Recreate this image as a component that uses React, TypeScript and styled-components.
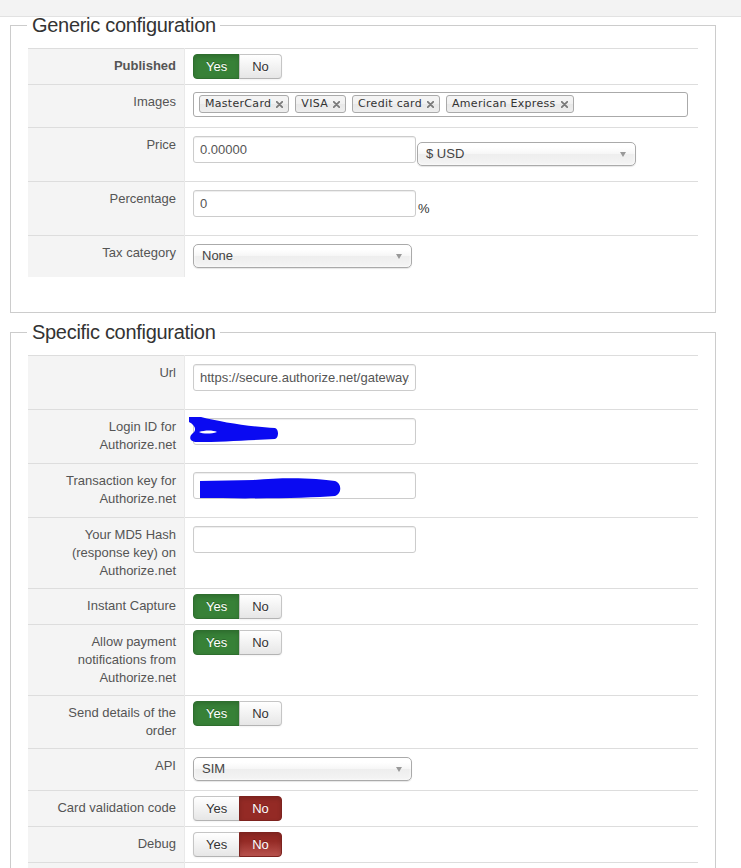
import React from 'react';
import styled, {createGlobalStyle} from 'styled-components';

const GlobalStyle = createGlobalStyle`
  body {
    margin: 0;
    background: #fff;
    font-family: "Liberation Sans", Arial, sans-serif;
    font-size: 13px;
    line-height: 18px;
    color: #333;
  }
`;

type Tone = 'off' | 'yes' | 'no';

const TopBar = styled.div`
  height: 16px;
  background: #f3f3f3;
  border-bottom: 1px solid #e2e2e2;
`;

const Page = styled.div`
  display: flex;
  flex-direction: column;
  gap: 11px;
  padding: 0 25px 0 10px;
`;

const Fieldset = styled.fieldset`
  min-width: 0;
  margin: 0;
  padding: 0 17px 35px;
  border: 1px solid #ccc;
`;

const Legend = styled.legend`
  margin: 0 0 15px -1px;
  padding: 0 4px 0 5px;
  font-size: 20px;
  letter-spacing: -0.3px;
  line-height: 16px;
  color: #333;
`;

const Table = styled.table`
  width: 100%;
  border-collapse: collapse;
  table-layout: fixed;
`;

const Key = styled.td<{ $bold?: boolean }>`
  width: 140px;
  padding: 8px;
  background: #f4f4f4;
  border-top: 1px solid #ddd;
  border-right: 1px solid #e9e9e9;
  text-align: right;
  vertical-align: top;
  color: #555;
  font-weight: ${(props) => props.$bold ? 'bold' : 'normal'};
`;

const Value = styled.td`
  padding: 5px 8px;
  border-top: 1px solid #ddd;
  vertical-align: top;
`;

const Inline = styled.div`
  display: flex;
  align-items: flex-start;
`;

const InputWrap = styled.div`
  position: relative;
  width: 223px;
`;

const Scribble = styled.svg`
  position: absolute;
  overflow: visible;
  pointer-events: none;
`;

const TextField = styled.input`
  display: block;
  box-sizing: border-box;
  width: 223px;
  height: 27px;
  margin: 3px 0 13px;
  padding: 4px 6px;
  border: 1px solid #ccc;
  border-radius: 3px;
  background: #fff;
  box-shadow: inset 0 1px 1px rgba(0, 0, 0, 0.075);
  font: 13px/18px "Liberation Sans", Arial, sans-serif;
  color: #555;
  outline: none;
`;

const Suffix = styled.span`
  margin-left: 2px;
  padding-top: 13px;
  color: #333;
`;

const SelectBox = styled.div<{ $top?: number }>`
  box-sizing: border-box;
  display: flex;
  align-items: center;
  justify-content: space-between;
  width: 219px;
  height: 24px;
  margin: ${(props) => props.$top ?? 3}px 0 4px 1px;
  padding-left: 8px;
  border: 1px solid #aaa;
  border-radius: 5px;
  background: linear-gradient(#fff 20%, #f6f6f6 50%, #eee 52%, #f4f4f4 100%);
  box-shadow: inset 0 0 3px #fff, 0 1px 1px rgba(0, 0, 0, 0.1);
  color: #444;
  line-height: 22px;

  &:first-child {
    margin-left: 0;
  }
`;

const Arrow = styled.span`
  width: 0;
  height: 0;
  margin-right: 9px;
  border-left: 3.5px solid transparent;
  border-right: 3.5px solid transparent;
  border-top: 5px solid #999;
`;

const ChipBox = styled.ul`
  box-sizing: border-box;
  display: flex;
  align-items: flex-start;
  gap: 6px;
  width: 495px;
  height: 25px;
  margin: 2px 0 5px;
  padding: 2px 5px;
  list-style: none;
  border: 1px solid #aaa;
  border-radius: 3px;
  background: #fff;
`;

const Chip = styled.li`
  box-sizing: border-box;
  display: flex;
  align-items: center;
  gap: 5px;
  height: 18px;
  padding: 0 5px;
  border: 1px solid #aaa;
  border-radius: 3px;
  background: linear-gradient(#f4f4f4 20%, #f0f0f0 50%, #e8e8e8 52%, #eee 100%);
  font: 11px/16px "DejaVu Sans", Verdana, sans-serif;
  letter-spacing: 0.3px;
  color: #333;
  white-space: nowrap;
`;

const BtnGroup = styled.div`
  display: inline-flex;
  vertical-align: top;
`;

const toneBg = (tone: Tone, hover?: boolean) => {
    if (tone === 'yes') return '#378137';
    if (tone === 'no') return hover ? 'linear-gradient(#942a25 35%, #b9534e)' : '#942a25';
    return 'linear-gradient(#fff, #e6e6e6)';
};

const Btn = styled.span<{ $tone: Tone; $hover?: boolean }>`
  box-sizing: border-box;
  height: 25px;
  padding: 0 12px;
  border: 1px solid ${(props) => props.$tone === 'yes' ? '#2e6e2e' : props.$tone === 'no' ? '#7d231f' : '#c5c5c5'};
  border-bottom-color: ${(props) => props.$tone === 'off' ? '#b3b3b3' : props.$tone === 'yes' ? '#2e6e2e' : '#7d231f'};
  background: ${(props) => toneBg(props.$tone, props.$hover)};
  color: ${(props) => props.$tone === 'off' ? '#333' : '#fff'};
  text-shadow: ${(props) => props.$tone === 'off' ? '0 1px 1px rgba(255,255,255,.75)' : '0 -1px 0 rgba(0,0,0,.25)'};
  box-shadow: ${(props) => props.$tone === 'off'
          ? 'inset 0 1px 0 rgba(255,255,255,.2), 0 1px 2px rgba(0,0,0,.05)'
          : 'inset 0 2px 4px rgba(0,0,0,.15)'};
  font-size: 13px;
  line-height: 23px;

  &:first-child {
    border-radius: 4px 0 0 4px;
  }

  &:last-child {
    margin-left: -1px;
    border-radius: 0 4px 4px 0;
  }
`;

interface ToggleProps {
    value: 'yes' | 'no';
    hover?: boolean;
}

const Toggle = ({value, hover}: ToggleProps) => (
    <BtnGroup>
        <Btn $tone={value === 'yes' ? 'yes' : 'off'}>Yes</Btn>
        <Btn $tone={value === 'no' ? 'no' : 'off'} $hover={hover}>No</Btn>
    </BtnGroup>
);

const Select = ({value, top}: { value: string; top?: number }) => (
    <SelectBox $top={top}>
        <span>{value}</span>
        <Arrow/>
    </SelectBox>
);

const CloseIcon = () => (
    <svg width='7' height='7' viewBox='0 0 7 7'>
        <path d='M0.8 0.8 L6.2 6.2 M6.2 0.8 L0.8 6.2' stroke='#7a7a7a' strokeWidth='1.8' strokeLinecap='round'/>
    </svg>
);

const Chips = ({items}: { items: string[] }) => (
    <ChipBox>
        {items.map((item) => (
            <Chip key={item}>
                {item}
                <CloseIcon/>
            </Chip>
        ))}
    </ChipBox>
);

// blue marker strokes that hide the credentials
const ScribbleLogin = () => (
    <Scribble width='100' height='30' viewBox='0 0 100 30' style={{left: -4, top: -2}}>
        <path
            d='M0 1 L12 1 C32 6 62 11 86 12 C90 13 90 22 86 23 C62 24 32 26 8 26 C1 26 -1 21 4 17 C8 14 6 9 0 6 Z'
            fill='#0a0af2'/>
        <path d='M10 16 C16 14 24 14 28 16 C22 18 14 18 10 16 Z' fill='#fff'/>
    </Scribble>
);

const ScribbleKey = () => (
    <Scribble width='150' height='30' viewBox='0 0 150 30' style={{left: 6, top: 4}}>
        <path d='M1 5 L55 4 C85 1 118 2 136 5 C143 7 143 18 136 20 C110 22 60 23 1 22 Z' fill='#0a0af2'/>
    </Scribble>
);

interface Row {
    label: string;
    bold?: boolean;
    control: React.ReactNode;
}

const genericRows: Row[] = [
    {label: 'Published', bold: true, control: <Toggle value='yes'/>},
    {label: 'Images', control: <Chips items={['MasterCard', 'VISA', 'Credit card', 'American Express']}/>},
    {
        label: 'Price',
        control: (
            <Inline>
                <TextField readOnly value='0.00000'/>
                <Select value='$ USD' top={9}/>
            </Inline>
        ),
    },
    {
        label: 'Percentage',
        control: (
            <Inline>
                <TextField readOnly value='0'/>
                <Suffix>%</Suffix>
            </Inline>
        ),
    },
    {label: 'Tax category', control: <Select value='None'/>},
];

const specificRows: Row[] = [
    {label: 'Url', control: <TextField readOnly value='https://secure.authorize.net/gateway/transact.dll'/>},
    {
        label: 'Login ID for Authorize.net',
        control: (
            <InputWrap>
                <TextField readOnly value=''/>
                <ScribbleLogin/>
            </InputWrap>
        ),
    },
    {
        label: 'Transaction key for Authorize.net',
        control: (
            <InputWrap>
                <TextField readOnly value=''/>
                <ScribbleKey/>
            </InputWrap>
        ),
    },
    {label: 'Your MD5 Hash (response key) on Authorize.net', control: <TextField readOnly value=''/>},
    {label: 'Instant Capture', control: <Toggle value='yes'/>},
    {label: 'Allow payment notifications from Authorize.net', control: <Toggle value='yes'/>},
    {label: 'Send details of the order', control: <Toggle value='yes'/>},
    {label: 'API', control: <Select value='SIM'/>},
    {label: 'Card validation code', control: <Toggle value='no'/>},
    {label: 'Debug', control: <Toggle value='no' hover/>},
    {label: '', control: null},
];

const ConfigTable = ({rows}: { rows: Row[] }) => (
    <Table>
        <tbody>
        {rows.map((row, i) => (
            <tr key={i}>
                <Key $bold={row.bold}>{row.label}</Key>
                <Value>{row.control}</Value>
            </tr>
        ))}
        </tbody>
    </Table>
);

const App = () => (
    <>
        <GlobalStyle/>
        <TopBar/>
        <Page>
            <Fieldset>
                <Legend>Generic configuration</Legend>
                <ConfigTable rows={genericRows}/>
            </Fieldset>
            <Fieldset>
                <Legend>Specific configuration</Legend>
                <ConfigTable rows={specificRows}/>
            </Fieldset>
        </Page>
    </>
);

export default App;
